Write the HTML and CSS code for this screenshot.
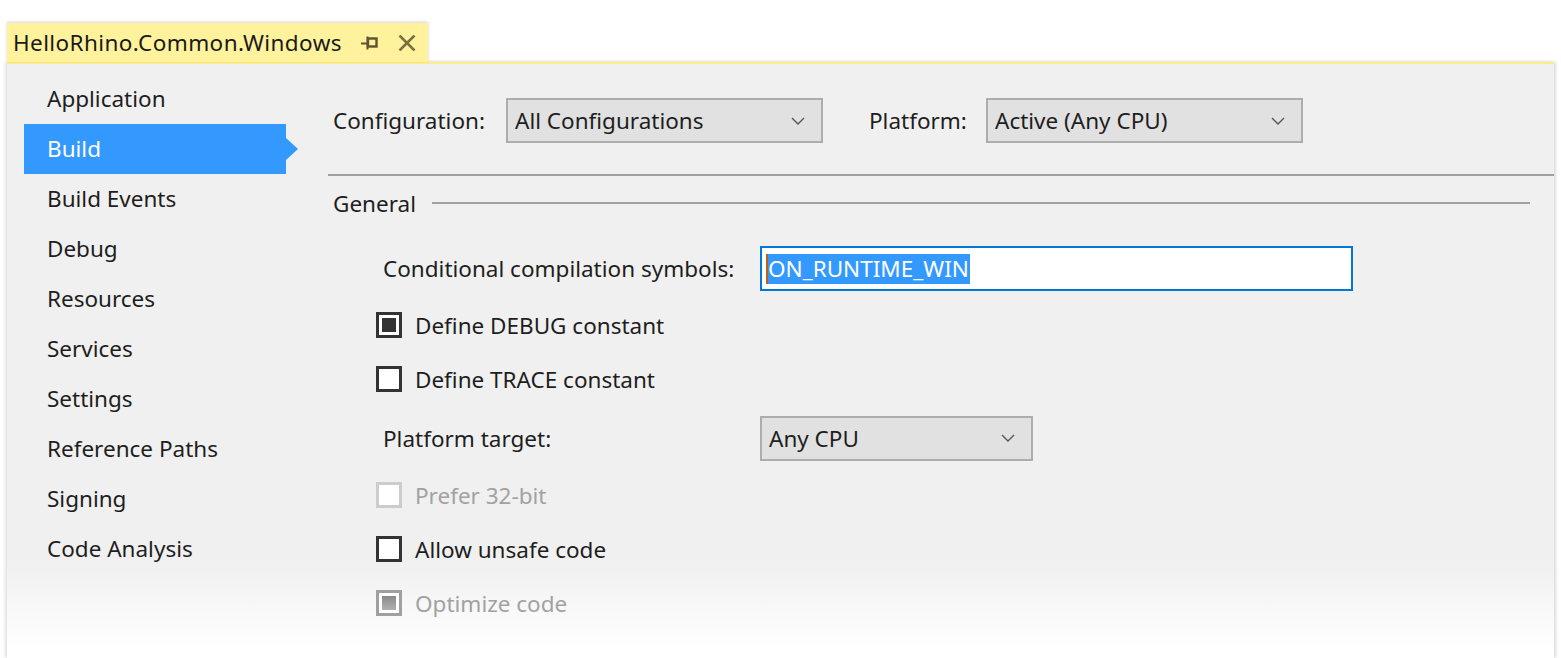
FILE: index.html
```html
<!DOCTYPE html>
<html>
<head>
<meta charset="utf-8">
<link rel="stylesheet" href="styles.css">
</head>
<body>
<div class="tabstrip">
  <div class="tab">
    <span class="tab-title">HelloRhino.Common.Windows</span>
    <svg class="pin" width="17" height="14" viewBox="0 0 17 14"><path d="M0 7.5H6" stroke="#5e5230" stroke-width="2"/><path d="M6.5 0.5V13.5" stroke="#5e5230" stroke-width="2"/><rect x="7" y="2.5" width="8.5" height="8" fill="none" stroke="#5e5230" stroke-width="2.4"/></svg>
    <svg class="close" width="18" height="16" viewBox="0 0 18 16"><path d="M1.5 0.5L16.5 15.5M16.5 0.5L1.5 15.5" stroke="#7d6f44" stroke-width="2.6"/></svg>
  </div>
</div>
<div class="window">
  <nav class="sidebar">
    <div class="nav-item">Application</div>
    <div class="nav-item active">Build</div>
    <div class="nav-item">Build Events</div>
    <div class="nav-item">Debug</div>
    <div class="nav-item">Resources</div>
    <div class="nav-item">Services</div>
    <div class="nav-item">Settings</div>
    <div class="nav-item">Reference Paths</div>
    <div class="nav-item">Signing</div>
    <div class="nav-item">Code Analysis</div>
  </nav>
  <main class="content">
    <div class="config-row">
      <span class="lbl lbl-config">Configuration:</span>
      <div class="combo combo-wide"><span>All Configurations</span><svg class="chev" width="14" height="8" viewBox="0 0 14 8"><path d="M1 1L7 7L13 1" fill="none" stroke="#555" stroke-width="1.4"/></svg></div>
      <span class="lbl lbl-platform">Platform:</span>
      <div class="combo combo-wide"><span>Active (Any CPU)</span><svg class="chev" width="14" height="8" viewBox="0 0 14 8"><path d="M1 1L7 7L13 1" fill="none" stroke="#555" stroke-width="1.4"/></svg></div>
    </div>
    <div class="divider"></div>
    <div class="section-head">
      <span class="section-title">General</span>
      <span class="section-line"></span>
    </div>
    <div class="field-row cond-row">
      <span class="field-label">Conditional compilation symbols:</span>
      <div class="textbox"><span class="caret"></span><span class="selected">ON_RUNTIME_WIN</span></div>
    </div>
    <div class="check-row first">
      <span class="box"><span class="fill"></span></span>
      <span class="check-text">Define DEBUG constant</span>
    </div>
    <div class="check-row">
      <span class="box"></span>
      <span class="check-text">Define TRACE constant</span>
    </div>
    <div class="field-row target-row">
      <span class="field-label">Platform target:</span>
      <div class="combo combo-target"><span>Any CPU</span><svg class="chev" width="14" height="8" viewBox="0 0 14 8"><path d="M1 1L7 7L13 1" fill="none" stroke="#555" stroke-width="1.4"/></svg></div>
    </div>
    <div class="check-row disabled gap">
      <span class="box"></span>
      <span class="check-text">Prefer 32-bit</span>
    </div>
    <div class="check-row">
      <span class="box"></span>
      <span class="check-text">Allow unsafe code</span>
    </div>
    <div class="check-row disabled checked-disabled">
      <span class="box"><span class="fill"></span></span>
      <span class="check-text">Optimize code</span>
    </div>
  </main>
</div>
</body>
</html>
```
FILE: styles.css
```css
html, body {
  margin: 0;
  padding: 0;
  background: #ffffff;
  width: 1561px;
  height: 658px;
  overflow: hidden;
  font-family: "Noto Sans", "Open Sans", sans-serif;
  font-size: 22.5px;
  color: #1e1e1e;
}

.tabstrip {
  padding: 23px 0 0 7px;
  height: 39px;
}

.tab {
  width: 421px;
  height: 39px;
  box-sizing: border-box;
  background: #fff29d;
  display: flex;
  align-items: center;
  padding-left: 6px;
  box-shadow: 0 -1px 3px rgba(0, 0, 0, 0.18);
  position: relative;
  z-index: 1;
}

.tab-title {
  color: #1a1a1a;
  letter-spacing: 0.4px;
}

.pin {
  margin-left: 19px;
}

.close {
  margin-left: 20px;
}

.window {
  margin-left: 7px;
  width: 1547px;
  height: 596px;
  box-sizing: border-box;
  border-top: 2px solid #fdee8c;
  background: linear-gradient(to bottom, #f0f0f0 0, #f0f0f0 500px, #ffffff 585px);
  box-shadow: -2px 0 3px rgba(0, 0, 0, 0.12), 2px 0 3px rgba(0, 0, 0, 0.14);
  display: flex;
}

.sidebar {
  padding: 10px 0 0 17px;
  width: 262px;
  flex: none;
}

.nav-item {
  height: 50px;
  line-height: 50px;
  padding-left: 23px;
  white-space: nowrap;
}

.nav-item.active {
  background: #3399ff;
  color: #ffffff;
  position: relative;
}

.nav-item.active::after {
  content: "";
  position: absolute;
  left: 100%;
  top: 14px;
  border-top: 11px solid transparent;
  border-bottom: 11px solid transparent;
  border-left: 12px solid #3399ff;
}

.content {
  margin-left: 42px;
  flex: 1;
  padding-top: 34px;
}

.config-row {
  display: flex;
  align-items: center;
  height: 45px;
  padding-left: 5px;
}

.lbl {
  white-space: nowrap;
  flex: none;
}

.lbl-config {
  width: 173px;
}

.lbl-platform {
  width: 117px;
  margin-left: 46px;
}

.combo {
  height: 45px;
  box-sizing: border-box;
  border: 2px solid #adadad;
  background: #e1e1e1;
  display: flex;
  align-items: center;
  justify-content: space-between;
  padding: 0 16px 0 7px;
  flex: none;
}

.combo-wide {
  width: 317px;
}

.combo-target {
  width: 273px;
}

.chev {
  flex: none;
}

.divider {
  height: 2px;
  background: #a0a0a0;
  margin-top: 31px;
}

.section-head {
  display: flex;
  align-items: center;
  height: 54px;
  padding-left: 5px;
  margin-right: 24px;
}

.section-title {
  flex: none;
}

.section-line {
  flex: 1;
  height: 2px;
  background: #a0a0a0;
  margin-left: 16px;
}

.field-row {
  display: flex;
  align-items: center;
  padding-left: 55px;
}

.field-label {
  width: 377px;
  flex: none;
  white-space: nowrap;
}

.cond-row {
  height: 45px;
  margin-top: 16px;
}

.textbox {
  width: 593px;
  height: 45px;
  box-sizing: border-box;
  border: 2px solid #0078d7;
  background: #ffffff;
  display: flex;
  align-items: center;
  padding-left: 4px;
}

.caret {
  width: 2px;
  height: 30px;
  background: #c0600c;
  flex: none;
}

.selected {
  background: #3399ff;
  color: #ffffff;
  height: 30px;
  line-height: 30px;
  padding-right: 1px;
}

.check-row {
  display: flex;
  align-items: center;
  height: 54px;
  padding-left: 48px;
}

.check-row.first {
  margin-top: 7px;
}

.check-row.gap {
  margin-top: 3px;
}

.box {
  width: 26px;
  height: 26px;
  box-sizing: border-box;
  border: 3px solid #333333;
  background: #ffffff;
  display: flex;
  align-items: center;
  justify-content: center;
  flex: none;
}

.fill {
  width: 14px;
  height: 14px;
  background: #333333;
}

.check-text {
  margin-left: 13px;
  white-space: nowrap;
}

.target-row {
  height: 54px;
  margin-top: 5px;
}

.check-row.disabled .check-text {
  color: #a2a2a2;
}

.check-row.disabled .box {
  border-color: #cccccc;
}

.check-row.checked-disabled .box {
  border-color: #a0a0a0;
}

.check-row.checked-disabled .fill {
  background: linear-gradient(to bottom, #8a8a8a, #b0b0b0);
}
```
